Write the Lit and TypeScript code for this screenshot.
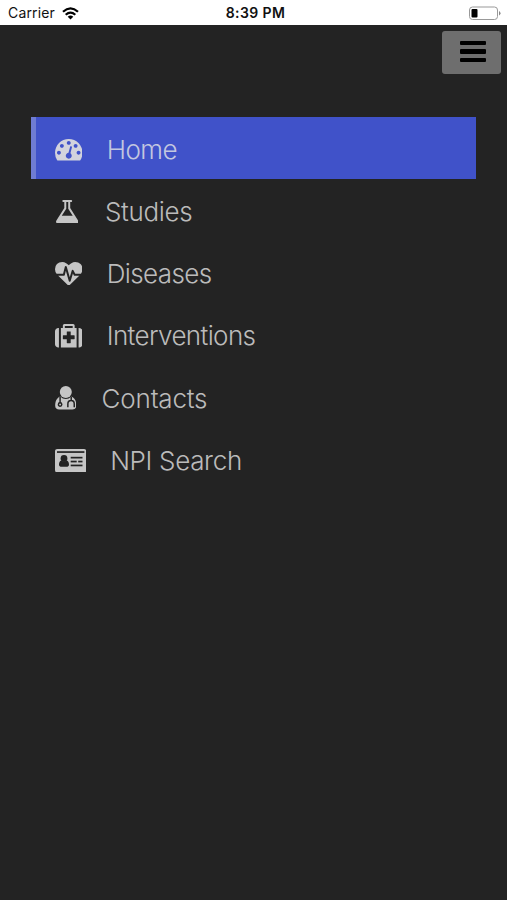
import { LitElement, html, css, svg } from "lit";
import { customElement } from "lit/decorators.js";

const home = svg`<path d="M384 1152q0-53-37.5-90.5t-90.5-37.5-90.5 37.5-37.5 90.5 37.5 90.5 90.5 37.5 90.5-37.5 37.5-90.5zm192-448q0-53-37.5-90.5t-90.5-37.5-90.5 37.5-37.5 90.5 37.5 90.5 90.5 37.5 90.5-37.5 37.5-90.5zm428 481l101-382q6-26-7.5-48.5t-38.5-29.5-48 6.5-30 39.5l-101 382q-60 5-107 43.5t-63 98.500q-20 77 20 146t117 89 146-20 89-117q16-60-6-117t-72-91zm660-33q0-53-37.5-90.5t-90.5-37.5-90.5 37.5-37.5 90.5 37.5 90.5 90.5 37.5 90.5-37.5 37.5-90.5zm-640-640q0-53-37.5-90.5t-90.5-37.5-90.5 37.5-37.5 90.5 37.5 90.5 90.5 37.5 90.5-37.5 37.5-90.5zm448 192q0-53-37.5-90.5t-90.5-37.5-90.5 37.5-37.5 90.5 37.5 90.5 90.5 37.5 90.5-37.5 37.5-90.5zm320 448q0 261-141 483-19 29-54 29h-1402q-35 0-54-29-141-221-141-483 0-182 71-348t191-286 286-191 348-71 348 71 286 191 191 286 71 348z"/>`;
const flask = svg`<path d="M1591 1448q56 89 21.5 152.5t-140.5 63.5h-1152q-106 0-140.5-63.5t21.5-152.5l503-793v-399h-64q-26 0-45-19t-19-45 19-45 45-19h512q26 0 45 19t19 45-19 45-45 19h-64v399zm-779-725l-272 429h712l-272-429-20-31v-436h-128v436z"/>`;
const heart = svg`<path d="M1280 1024h305q-5 6-10 10.5t-9 7.5l-3 4-623 600q-18 18-44 18t-44-18l-624-602q-5-2-21-20h369q22 0 39.5-13.5t22.5-34.5l70-281 190 667q6 20 23 33t39 13q21 0 38-13t23-33l146-485 56 112q18 35 57 35zm512-428q0 145-103 300h-369l-111-221q-8-17-25.5-27t-36.5-8q-45 5-56 46l-129 430-196-686q-6-20-23.5-33t-39.5-13-39 13.5-22 34.5l-116 464h-423q-103-155-103-300 0-220 127-344t351-124q62 0 126.5 21.5t120 58 95.5 68.5 76 68q36-36 76-68t95.5-68.5 120-58 126.5-21.5q224 0 351 124t127 344z"/>`;
const medkit = svg`<path d="M1280 1088v-192q0-14-9-23t-23-9h-224v-224q0-14-9-23t-23-9h-192q-14 0-23 9t-9 23v224h-224q-14 0-23 9t-9 23v192q0 14 9 23t23 9h224v224q0 14 9 23t23 9h192q14 0 23-9t9-23v-224h224q14 0 23-9t9-23zm-640-704h512v-128h-512v128zm-384 0v1280h-32q-92 0-158-66t-66-158v-832q0-92 66-158t158-66h32zm1152 0v1280h-1024v-1280h128v-160q0-40 28-68t68-28h576q40 0 68 28t28 68v160h128zm384 224v832q0 92-66 158t-158 66h-32v-1280h32q92 0 158 66t66 158z"/>`;
const doctor = svg`
  <circle cx="10.800" cy="6.100" r="6.100"/>
  <path d="M5.200 10.600C1.400 12 0 15.600 0 20c0 2.500 1.600 3.900 4 3.900h13.600c2.400 0 4-1.400 4-3.900 0-4.400-1.400-8-5.200-9.400-3.200 3.400-8 3.400-11.200 0z"/>
  <g fill="none" stroke="#232323" stroke-width="1.500">
    <path d="M5 11v6.500M16.300 11v3.700M12.900 21.500v-3.200c0-2.300 1.300-3.500 3.300-3.500s3.200 1.200 3.200 3.500v3.200"/>
    <circle cx="5" cy="18.800" r="1.700"/>
  </g>`;
const card = svg`
  <rect width="31.400" height="23.600" rx="2.500"/>
  <g fill="#232323">
    <rect x="2" y="2.200" width="27.400" height="1.700"/>
    <circle cx="9" cy="9.500" r="3.400"/>
    <path d="M6.300 11.400c1.600 1.500 3.800 1.500 5.400 0 1.600.3 2.300 2 2.300 4.200 0 1.300-.8 2.200-1.700 2.200H5.700c-.9 0-1.700-.9-1.700-2.200 0-2.200.7-3.900 2.300-4.200z"/>
    <rect x="15.700" y="7.800" width="11.800" height="1.700"/>
    <rect x="15.700" y="11.700" width="6" height="1.700"/>
    <rect x="23.200" y="11.700" width="4.300" height="1.700"/>
    <rect x="15.700" y="15.600" width="11.800" height="1.700"/>
  </g>`;

const items = [
  { id: "home", label: "Home", icon: home, box: "0 128 1792 1536" },
  { id: "studies", label: "Studies", icon: flask, box: "165 128 1462 1536" },
  { id: "diseases", label: "Diseases", icon: heart, box: "0 128 1792 1536" },
  { id: "interventions", label: "Interventions", icon: medkit, box: "0 128 1792 1536" },
  { id: "contacts", label: "Contacts", icon: doctor, box: "0 0 21.6 24" },
  { id: "npi", label: "NPI Search", icon: card, box: "0 0 31.4 23.6" },
];

@customElement("app-root")
export class AppRoot extends LitElement {
  static styles = css`
    :host { display: block; height: 900px; background: #232323; box-sizing: border-box; overflow: hidden; }
    .status { height: 25px; background: #fff; color: #111; display: grid; grid-template-columns: 1fr auto 1fr; align-items: center;
      font: 400 14px/24px "Inter", sans-serif; padding: 1px 6px 0 8px; box-sizing: border-box; }
    .carrier { display: flex; align-items: center; gap: 7px; letter-spacing: .15px; }
    .time { font-weight: 600; font-size: 14px; letter-spacing: .4px; padding-left: 2px; }
    .battery { justify-self: end; display: block; }
    .top { display: flex; justify-content: flex-end; padding: 6px 6px 0 0; height: 92px; box-sizing: border-box; }
    .toggle { width: 59px; height: 43px; border: 0; border-radius: 3px; background: #6e6e6e; padding: 1px 0 3px 3px; display: flex; flex-direction: column; align-items: center; justify-content: center; gap: 4.200px; }
    .bar { width: 26px; height: 4.300px; border-radius: 1px; background: #000; }
    .menu { margin: 0 31px; display: flex; flex-direction: column; }
    .item { height: 62.250px; display: flex; align-items: center; box-sizing: border-box; padding: 3px 0 0 23.500px; color: #bbb; fill: #c5c5c5; }
    .home { background: #4052c9; border-left: 5px solid #6f7cd3; padding-left: 18.500px; color: #c3c7e0; fill: #d2d3dd; }
    .icon { height: 23.600px; flex: none; display: block; margin-top: -1px; }
    .label { font: 285 26px/32px "Inter", sans-serif; white-space: nowrap; }
    .home .icon { width: 27.500px; } .home .label { margin-left: 24.700px; letter-spacing: -.5px; }
    .studies .icon { width: 22.500px; margin-left: 1px; } .studies .label { margin-left: 27px; letter-spacing: -.35px; }
    .diseases .icon { width: 27.500px; } .diseases .label { margin-left: 24.700px; letter-spacing: -.6px; }
    .interventions .icon { width: 27.500px; } .interventions .label { margin-left: 24.700px; letter-spacing: -.62px; }
    .contacts .icon { width: 21.600px; } .contacts .label { margin-left: 25.500px; letter-spacing: -.2px; }
    .npi .icon { width: 31.400px; } .npi .label { margin-left: 24.300px; letter-spacing: -.33px; }
  `;

  render() {
    return html`
      <header class="status">
        <span class="carrier"><span class="name">Carrier</span>
          <svg class="wifi" width="17" height="13" viewBox="0 0 17 13" fill="none" stroke="#000" stroke-width="2.200">
            <path d="M1 4.800Q8.500-2 16 4.800M3.700 7.800Q8.500 3.500 13.300 7.800"/>
            <path d="M8.500 12.500L5.700 9.700Q8.500 7.400 11.300 9.700z" fill="#000" stroke="none"/>
          </svg>
        </span>
        <span class="time">8:39 PM</span>
        <svg class="battery" width="33" height="15" viewBox="0 0 33 15">
          <rect x="1.500" y="1" width="28" height="12.500" rx="3" fill="#fff" stroke="#999"/>
          <rect x="3.500" y="3" width="6" height="8.500" rx="1" fill="#000"/>
          <path d="M31 5v4.500q1.500-.7 1.500-2.250T31 5z" fill="#888"/>
        </svg>
      </header>
      <div class="top">
        <button class="toggle" aria-label="Menu"><span class="bar"></span><span class="bar"></span><span class="bar"></span></button>
      </div>
      <nav class="menu">
        ${items.map((i) => html`<a class="item ${i.id}">
          <svg class="icon" viewBox=${i.box}>${i.icon}</svg><span class="label">${i.label}</span>
        </a>`)}
      </nav>
    `;
  }
}
